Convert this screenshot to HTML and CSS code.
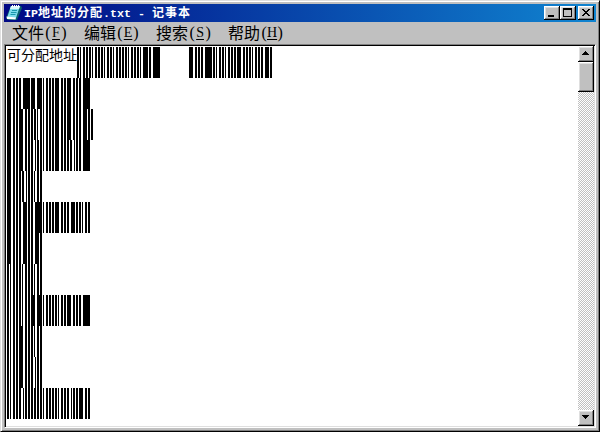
FILE: index.html
```
<!DOCTYPE html>
<html lang="zh-CN">
<head>
<meta charset="utf-8">
<title>IP地址的分配.txt - 记事本</title>
<link rel="stylesheet" href="styles.css">
</head>
<body>
<div class="window">
  <header class="titlebar">
    <svg class="app-icon" width="18" height="18" viewBox="0 0 18 18">
      <path d="M6 2L16 2L17 4L12 16L3 16L1 14L5 4z" fill="#08606c"/>
      <path d="M6 2H15L11 14H2z" fill="#7cdcec"/>
      <path d="M6 2H15L14 5H5z" fill="#d8f8fc"/>
      <path d="M7 6.5H12M6 8.5H11.500M5.500 10.500H10.500" stroke="#1898ac" stroke-width="1" fill="none"/>
      <path d="M1.500 12.500L11 13.500L10.500 15.500L2 15z" fill="#fff"/>
      <path d="M7.500 1V3M9.500 1V3M11.500 1V3M13.500 1V3" stroke="#fff" fill="none"/>
    </svg>
    <h1 class="title"><span class="latin">IP</span>地址的分配<span class="latin">.txt - </span>记事本</h1>
    <div class="controls">
      <button class="button" aria-label="最小化"><svg width="16" height="14" shape-rendering="crispEdges"><path d="M4 9h6v2H4z"/></svg></button>
      <button class="button" aria-label="最大化"><svg width="16" height="14" shape-rendering="crispEdges"><path fill-rule="evenodd" d="M3 2h9v9H3zM4 4h7v6H4z"/></svg></button>
      <button class="button close" aria-label="关闭"><svg width="16" height="14" shape-rendering="crispEdges"><path d="M4 3h2v1h1v1h2V4h1V3h2v1h-1v1h-1v1H9v1h1v1h1v1h1v1h-2V9H9V8H7v1H6v1H4V9h1V8h1V7h1V6H6V5H5V4H4z"/></svg></button>
    </div>
  </header>
  <nav class="menu">
    <span class="item">文件<span class="key"><b>(</b><u>F</u><b>)</b></span></span>
    <span class="item">编辑<span class="key"><b>(</b><u>E</u><b>)</b></span></span>
    <span class="item">搜索<span class="key"><b>(</b><u>S</u><b>)</b></span></span>
    <span class="item">帮助<span class="key"><b>(</b><u>H</u><b>)</b></span></span>
  </nav>
  <main class="editor">
    <div class="document">
      <div class="line"><span class="text">可分配地址</span><svg class="bars first" id="first"></svg></div>
      <div id="lines"></div>
    </div>
    <div class="scrollbar">
      <button class="button arrow" aria-label="向上"><svg width="16" height="16" shape-rendering="crispEdges"><path d="M7 5h1v1h1v1h1v1h1v1H4V8h1V7h1V6h1z"/></svg></button>
      <div class="button thumb"></div>
      <div class="track"></div>
      <button class="button arrow" aria-label="向下"><svg width="16" height="16" shape-rendering="crispEdges"><path d="M4 5h7v1h-1v1H9v1H8v1H7V8H6V7H5V6H4z"/></svg></button>
    </div>
  </main>
</div>
<script src="bars.js"></script>
</body>
</html>
```
FILE: styles.css
```
* { box-sizing: border-box; }
body { margin: 0; font-family: "Liberation Mono", "Noto Sans CJK SC", monospace; color: #000; }
.window {
  width: 600px; height: 432px; padding: 2px; background: #c0c0c0;
  border: 1px solid; border-color: #dfdfdf #000 #000 #dfdfdf;
  box-shadow: inset 1px 1px #fff, inset -1px -1px #808080;
  display: flex; flex-direction: column;
}
.titlebar {
  height: 18px; margin: 1px 1px 0; display: flex; align-items: center; flex: none;
  background: linear-gradient(90deg, #000884, #1084d0); padding-right: 2px;
}
.app-icon { margin-left: 1px; flex: none; }
.title {
  margin: 0 0 0 1px; flex: 1; color: #fff; white-space: pre;
  font: bold 12px/18px "Noto Sans CJK SC", sans-serif; letter-spacing: 1px;
}
.title .latin { font: bold 11.67px/18px "Liberation Mono", monospace; letter-spacing: 0; }
.controls { display: flex; }
.button {
  display: block; width: 16px; height: 14px; padding: 0; margin: 0; border: 0; background: #c0c0c0;
  box-shadow: inset -1px -1px #000, inset 1px 1px #fff, inset -2px -2px #808080, inset 2px 2px #dfdfdf;
}
.button svg { display: block; }
.close { margin-left: 2px; }
.menu {
  height: 22px; flex: none; display: flex; gap: 16px; padding-left: 9px;
  font: 16px/21px "Noto Sans CJK SC", sans-serif; white-space: nowrap;
}
.item { display: flex; }
.key { display: grid; grid-template-columns: repeat(3, 8px); justify-items: center; font: 16px/21px "Liberation Serif", serif; }
.key b { font-weight: normal; }
.key u { font-size: 14px; text-underline-offset: 2px; }
.editor {
  flex: 1; min-height: 0; margin: 0 1px 1px; display: flex; background: #fff;
  border: 1px solid; border-color: #808080 #fff #fff #808080;
  box-shadow: inset 1px 1px #000, inset -1px -1px #dfdfdf; padding: 1px;
}
.document { flex: 1; padding: 1px 0 0 1px; }
.line { height: 31px; display: flex; }
.text { width: 70px; flex: none; font: 14px/14px "Noto Sans CJK SC", sans-serif; }
.bars { display: block; height: 31px; flex: none; }
.first { width: 200px; }
.scrollbar { width: 16px; display: flex; flex-direction: column; }
.arrow { height: 16px; flex: none; }
.thumb { height: 30px; flex: none; }
.track { flex: 1; background: repeating-conic-gradient(#c0c0c0 0 25%, #fff 0 50%) 0 0 / 2px 2px; }
```
FILE: bars.js
```
const firstLine = "0-2 3-4 6-8 9-11 12-14 15-16 18-20 21-23 24-26 27-28 30-32 33-35 36-37 39-41 42-44 45-47 48-50 51-52 54-56 57-59 60-62 63-64 66-71 72-74 76-83 112-116 118-120 121-123 124-126 128-135 136-138 139-140 142-144 145-147 148-149 151-153 154-156 157-159 160-164 166-168 169-171 172-174 175-176 178-180 181-183 184-186 188-192 193-195";
const lines = [
  "0-4 6-8 9-11 12-14 16-23 24-28 30-35 36-37 39-41 42-44 45-47 48-52 54-56 57-59 60-64 66-68 69-71 72-74 76-83",
  "0-4 6-8 9-11 12-16 18-20 21-23 24-26 27-29 30-31 33-35 36-37 39-41 42-44 45-47 48-52 54-56 57-59 60-64 66-68 69-71 72-74 76-80 81-83 84-86",
  "0-4 6-8 9-11 12-16 18-20 21-23 24-26 28-29 30-32 33-35 36-37 39-41 42-44 45-47 48-52 54-56 57-59 60-62 63-65 67-68 69-71 72-74 76-83",
  "0-4 6-8 9-11 12-14 15-17 19-20 21-23 24-26 27-28 30-32 33-35",
  "0-4 6-8 9-11 12-14 16-20 21-23 24-26 28-35 36-37 39-41 42-44 45-47 48-52 54-56 57-59 60-62 64-68 69-71 72-74 75-76 78-80 81-83",
  "0-4 6-8 9-11 12-14 16-20 21-23 24-26 28-32 33-35",
  "0-2 3-4 6-8 9-11 12-14 15-16 18-20 21-23 24-26 27-28 30-32 33-35",
  "0-2 3-4 6-8 9-11 12-14 15-16 18-20 21-23 24-28 30-35 36-37 39-41 42-44 45-47 48-50 51-52 54-56 57-59 60-64 66-68 69-71 72-74 76-83",
  "0-2 3-4 6-8 9-11 12-16 18-20 21-23 24-26 27-28 30-32 33-35",
  "0-2 3-4 6-8 9-11 12-16 18-20 21-23 24-26 28-29 30-32 33-35",
  "0-2 3-4 6-8 9-11 12-14 16-17 18-20 21-23 24-26 27-29 30-32 33-35 36-37 39-41 42-44 45-47 48-50 51-52 54-56 57-59 60-62 64-65 66-68 69-71 72-76 78-80 81-83"
];
const bars = runs => '<path shape-rendering="crispEdges" d="' + runs.split(" ").map(run => {
  const [start, end] = run.split("-").map(Number);
  return `M${start} 0H${end}V31H${start}z`;
}).join("") + '"/>';
document.getElementById("first").innerHTML = bars(firstLine);
document.getElementById("lines").innerHTML = lines.map(runs =>
  `<div class="line"><svg class="bars" width="90">${bars(runs)}</svg></div>`).join("");
```
